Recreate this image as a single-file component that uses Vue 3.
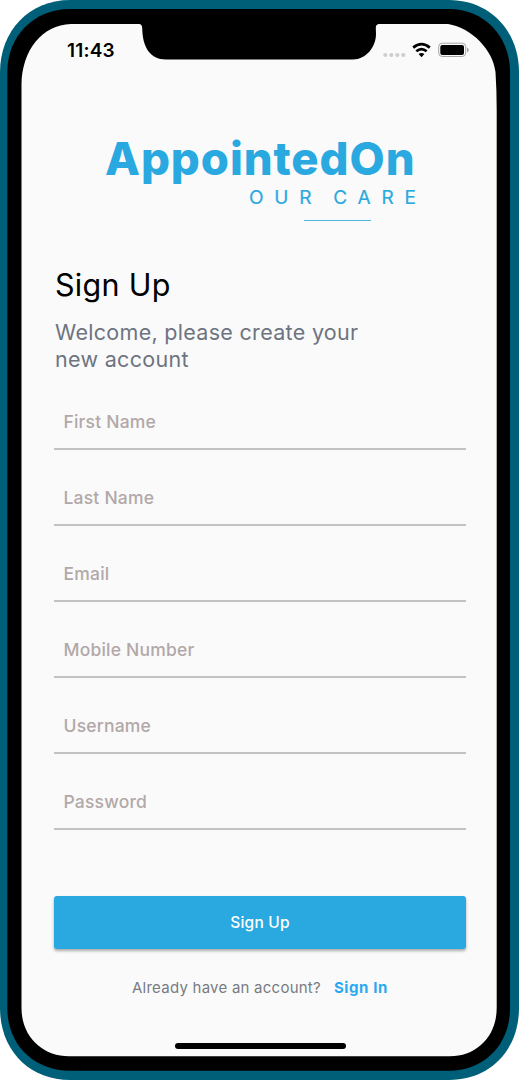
<script setup>
const fields = ['First Name', 'Last Name', 'Email', 'Mobile Number', 'Username', 'Password']
</script>

<template>
  <div class="phone">
    <svg class="frame" width="519" height="1080" viewBox="0 0 519 1080" aria-hidden="true">
      <path fill="#005f78" d="M70 0H449C490 0 519 31 519 72V1008C519 1050 490 1080 449 1080H70C29 1080 0 1050 0 1008V72C0 31 29 0 70 0Z" />
      <path d="M70 9H449C484 9 510 36 510 72V1008C510 1045 484 1070.7 449 1070.7H70C34 1070.7 7.3 1045 7.3 1008V72C7.3 36 34 9 70 9Z" />
      <path fill="#fafafa" d="M71 24H139Q142 24 142.200 28C142.500 47 150 59.500 166 59.500H353C366 59.500 376 47 376 34C376 28 374.500 24 380 24H448C472 28 493 50 495.500 72Q496.700 90 496.700 110V1008C496.700 1037 476 1056.300 450 1056.300H69C43 1056.300 21.500 1037 21.500 1008V85C22 50 42 25 71 24Z" />
    </svg>
    <header class="status">
      <span class="time">11:43</span>
      <svg class="signals" width="90" height="20" viewBox="0 0 90 20" aria-hidden="true">
        <g fill="#cecece"><circle cx="5.300" cy="15" r="2.100" /><circle cx="11.300" cy="15" r="2.100" /><circle cx="17.300" cy="15" r="2.100" /><circle cx="23.300" cy="15" r="2.100" /></g>
        <g fill="none" stroke="#000" stroke-width="2.700"><path d="M33.200 7.600Q41.500 .8 49.800 7.600" /><path d="M36.300 11.300Q41.500 7 46.700 11.300" /></g>
        <path d="M38.600 14Q41.500 11.800 44.400 14L41.500 17.200Z" />
        <rect x="58.700" y="3.200" width="27" height="13.300" rx="3.500" fill="none" stroke="#a5a5a5" />
        <rect x="60.300" y="4.900" width="23.700" height="10" rx="2" />
        <path fill="#a5a5a5" d="M87 7.500Q88.800 8.200 88.800 10T87 12.500Z" />
      </svg>
    </header>
    <main class="content">
      <div class="brand">
        <div class="name">AppointedOn</div>
        <div class="tagline">OUR CARE</div>
        <div class="rule"></div>
      </div>
      <h1>Sign Up</h1>
      <p class="welcome">Welcome, please create your<br>new account</p>
      <form @submit.prevent>
        <label v-for="field in fields" :key="field" class="field">{{ field }}</label>
        <button type="submit">Sign Up</button>
      </form>
      <p class="signin"><span>Already have an account?</span><a>Sign In</a></p>
    </main>
    <div class="home"></div>
  </div>
</template>

<style>
body { background: #fff; }
</style>

<style scoped>
* { box-sizing: border-box; }
.phone { position: relative; width: 519px; height: 1080px; overflow: hidden; font-family: Inter, sans-serif; display: flex; flex-direction: column; }
.frame { position: absolute; inset: 0; }
.status { position: relative; height: 130px; padding: 40px 49px 0 67px; display: flex; justify-content: space-between; align-items: flex-start; }
.time { font-size: 19px; line-height: 21px; font-weight: 600; letter-spacing: .2px; }
.signals { display: block; }
.content { position: relative; padding: 0 53px 0 54px; }
.brand { height: 131px; color: #29a9df; }
.name { margin-left: 51px; font-size: 45.500px; line-height: 57px; font-weight: 800; letter-spacing: .92px; white-space: nowrap; }
.tagline { margin: -1px 0 0 195px; font-size: 19px; line-height: 24px; font-weight: 400; letter-spacing: 10.800px; word-spacing: -5.200px; white-space: nowrap; -webkit-text-stroke: .2px #29a9df; }
.rule { width: 67px; height: 1px; margin: 10px 0 0 250px; background: #4db6df; }
h1 { margin: 0 0 0 1px; font-size: 30.500px; line-height: 47px; font-weight: 400; letter-spacing: .3px; }
.welcome { margin: 11px 0 0 1px; font-size: 21.500px; line-height: 27px; color: #6d7480; letter-spacing: .3px; }
form { display: block; margin-top: 1px; }
.field { display: block; height: 76px; padding: 35px 0 0 9.500px; border-bottom: 2px solid #c2c2c2; color: #b2a8a8; font-size: 17.500px; line-height: 26px; font-weight: 500; letter-spacing: .2px; }
button { display: block; width: 412px; height: 53px; margin-top: 66px; padding: 0; border: 0; border-radius: 3px; background: #29a9df; color: #fff; font: 500 15.500px/53px Inter, sans-serif; letter-spacing: .2px; box-shadow: 0 2px 3px rgba(0,0,0,.32); }
.signin { margin: 28px 0 0; padding-left: 78px; display: flex; gap: 13px; font-size: 15px; line-height: 22px; color: #777c82; white-space: nowrap; letter-spacing: .24px; }
.signin a { color: #29a9ef; font-weight: 700; letter-spacing: .6px; }
.home { position: absolute; left: 174.500px; top: 1043px; width: 171.500px; height: 6px; border-radius: 3px; background: #000; }
</style>
